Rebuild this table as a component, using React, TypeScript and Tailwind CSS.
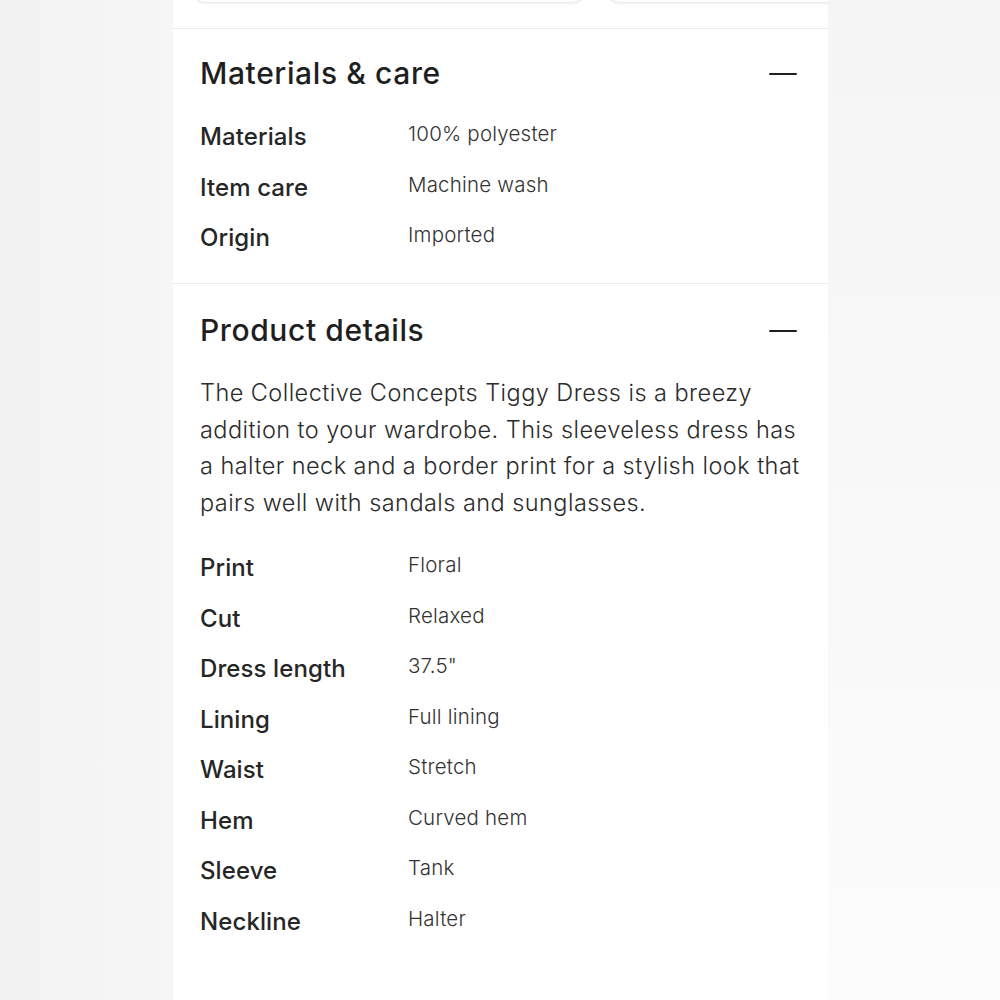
import React from "react";

const materials: [string, string][] = [
  ["Materials", "100% polyester"],
  ["Item care", "Machine wash"],
  ["Origin", "Imported"],
];

const details: [string, string][] = [
  ["Print", "Floral"],
  ["Cut", "Relaxed"],
  ["Dress length", '37.5"'],
  ["Lining", "Full lining"],
  ["Waist", "Stretch"],
  ["Hem", "Curved hem"],
  ["Sleeve", "Tank"],
  ["Neckline", "Halter"],
];

function Minus() {
  return (
    <svg width="28" height="4" viewBox="0 0 28 4" className="mt-[1px]">
      <line x1="1" y1="2" x2="27" y2="2" stroke="#1f1f1f" strokeWidth="2" strokeLinecap="round" />
    </svg>
  );
}

function Rows({ rows }: { rows: [string, string][] }) {
  return (
    <div className="flex flex-col gap-[20.5px]">
      {rows.map(([k, v]) => (
        <div key={k} className="flex h-[30px] items-start">
          <div className="w-[208px] text-[24px] leading-[30px] font-medium tracking-[0.1px] text-[#262626]">{k}</div>
          <div className="text-[20.5px] leading-[24px] font-light tracking-[0.2px] text-[#333333]">{v}</div>
        </div>
      ))}
    </div>
  );
}

function Header({ title }: { title: string }) {
  return (
    <div className="flex items-center justify-between">
      <h2 className="text-[30px] leading-[36px] font-medium tracking-[0.6px] text-[#1f1f1f]">{title}</h2>
      <Minus />
    </div>
  );
}

export default function App() {
  return (
    <div
      className="flex h-[1000px] w-full overflow-hidden"
      style={{ fontFamily: "Inter, 'Noto Sans', sans-serif" }}
    >
      <div className="w-[173px] bg-gradient-to-r from-[#f2f2f3] to-[#f6f6f7]" />
      <div className="flex w-[655px] flex-col bg-white">
        <div className="h-[29px] overflow-hidden border-b border-[#ececec]">
          <div className="-mt-[24px] flex gap-[22px] pl-[20px]">
            <div className="h-[26px] w-[392px] shrink-0 rounded-[14px] bg-white shadow-[0_1px_3px_rgba(0,0,0,0.12)]" />
            <div className="h-[26px] w-[300px] shrink-0 rounded-[14px] bg-white shadow-[0_1px_3px_rgba(0,0,0,0.12)]" />
          </div>
        </div>
        <section className="border-b border-[#ececec] pt-[26px] pr-[31px] pb-[30px] pl-[27px]">
          <Header title="Materials & care" />
          <div className="mt-[31px]">
            <Rows rows={materials} />
          </div>
        </section>
        <section className="pt-[28px] pr-[24px] pl-[27px]">
          <div className="pr-[7px]">
            <Header title="Product details" />
          </div>
          <p className="mt-[27px] pr-[4px] text-[23.5px] leading-[36.5px] font-light tracking-[0.45px] text-[#2b2b2b]">
            The Collective Concepts Tiggy Dress is a breezy addition to your wardrobe. This sleeveless dress has a halter neck and a border print for a stylish look that pairs well with sandals and sunglasses.
          </p>
          <div className="mt-[32px]">
            <Rows rows={details} />
          </div>
        </section>
      </div>
      <div className="flex-1 bg-gradient-to-b from-[#f5f5f6] to-[#fcfcfc]" />
    </div>
  );
}
